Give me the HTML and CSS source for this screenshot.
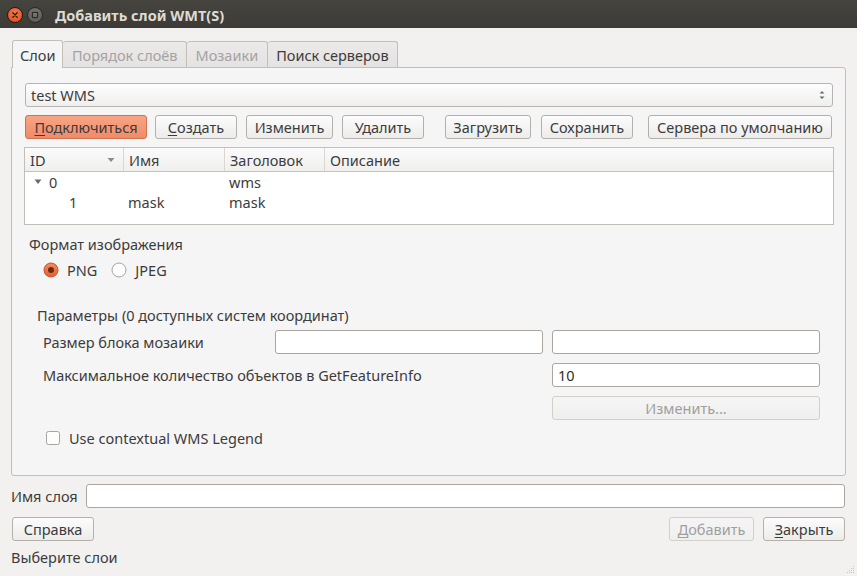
FILE: index.html
```html
<!DOCTYPE html>
<html lang="ru">
<head>
<meta charset="utf-8">
<title>Добавить слой WMT(S)</title>
<link rel="stylesheet" href="styles.css">
</head>
<body>
<div class="window">
  <div class="titlebar">
    <span class="wbtn close"><svg width="16" height="16" viewBox="0 0 16 16"><path d="M5.5 5.5 L10.5 10.5 M10.5 5.5 L5.5 10.5" stroke="#3a1a0c" stroke-width="1.6" stroke-linecap="round"/></svg></span>
    <span class="wbtn mini"><svg width="16" height="16" viewBox="0 0 16 16"><rect x="5" y="5" width="6" height="6" rx="1" fill="none" stroke="#2b2a27" stroke-width="1.4"/></svg></span>
    <span class="title">Добавить слой WMT(S)</span>
  </div>
  <div class="content">
    <div class="tabs">
      <div class="tab active">Слои</div>
      <div class="tab disabled">Порядок слоёв</div>
      <div class="tab disabled">Мозаики</div>
      <div class="tab">Поиск серверов</div>
    </div>
    <div class="pane">
      <div class="combo">
        <span>test WMS</span>
        <svg class="spin" width="8" height="12" viewBox="0 0 8 12"><path d="M1.5 4.5 L4 2 L6.5 4.5 Z M1.5 7.5 L4 10 L6.5 7.5 Z" fill="#6a6a6a"/></svg>
      </div>
      <div class="btnrow">
        <button class="btn primary w-connect"><u>П</u>одключиться</button>
        <button class="btn w-create"><u>С</u>оздать</button>
        <button class="btn w-edit">Изменить</button>
        <button class="btn w-del">Удалить</button>
        <button class="btn w-load">Загрузить</button>
        <button class="btn w-save">Сохранить</button>
        <button class="btn w-def">Сервера по умолчанию</button>
      </div>
      <div class="tree">
        <div class="thead">
          <div class="th c1">ID<svg class="sort" width="8" height="6" viewBox="0 0 8 6"><path d="M0.5 1 L7.5 1 L4 5 Z" fill="#8a8a8a"/></svg></div>
          <div class="th c2">Имя</div>
          <div class="th c3">Заголовок</div>
          <div class="th c4">Описание</div>
        </div>
        <div class="trow first">
          <div class="td c1"><svg class="expand" width="8" height="6" viewBox="0 0 8 6"><path d="M0.5 0.5 L7.5 0.5 L4 5 Z" fill="#6a6a6a"/></svg>0</div>
          <div class="td c2"></div>
          <div class="td c3">wms</div>
        </div>
        <div class="trow">
          <div class="td c1 child">1</div>
          <div class="td c2">mask</div>
          <div class="td c3">mask</div>
        </div>
      </div>
      <div class="section-label">Формат изображения</div>
      <div class="radios">
        <label class="radio"><svg width="16" height="16" viewBox="0 0 16 16"><defs><linearGradient id="rg" x1="0" y1="0" x2="0" y2="1"><stop offset="0" stop-color="#f48a62"/><stop offset="1" stop-color="#e3602f"/></linearGradient></defs><circle cx="8" cy="8" r="7" fill="url(#rg)" stroke="#c2532a"/><circle cx="8" cy="8" r="3" fill="#6b2a12"/></svg>PNG</label>
        <label class="radio"><svg width="16" height="16" viewBox="0 0 16 16"><circle cx="8" cy="8" r="7" fill="#fdfdfd" stroke="#a8a49e"/></svg>JPEG</label>
      </div>
      <div class="params">
        <div class="params-title">Параметры (0 доступных систем координат)</div>
        <div class="grid">
          <div class="glabel">Размер блока мозаики</div>
          <div class="input"></div>
          <div class="input"></div>
          <div class="glabel">Максимальное количество объектов в GetFeatureInfo</div>
          <div class="gempty"></div>
          <div class="input">10</div>
          <div class="gempty"></div>
          <div class="gempty"></div>
          <button class="btn wide disabledbtn">Изменить...</button>
        </div>
      </div>
      <label class="check"><svg width="14" height="14" viewBox="0 0 14 14"><rect x="0.5" y="0.5" width="13" height="13" rx="2" fill="#fdfdfd" stroke="#a8a49e"/></svg>Use contextual WMS Legend</label>
    </div>
    <div class="namerow">
      <span class="namelabel">Имя слоя</span>
      <div class="input grow"></div>
    </div>
    <div class="footer">
      <button class="btn w-82">Справка</button>
      <div class="fill"></div>
      <button class="btn disabledbtn w-add"><u>Д</u>обавить</button>
      <button class="btn w-82"><u>З</u>акрыть</button>
    </div>
    <div class="status">Выберите слои</div>
  </div>
  <svg class="grip" width="10" height="10" viewBox="0 0 10 10"><g fill="#c9c6c2"><rect x="8" y="2" width="1" height="1"/><rect x="6" y="4" width="1" height="1"/><rect x="8" y="4" width="1" height="1"/><rect x="4" y="6" width="1" height="1"/><rect x="6" y="6" width="1" height="1"/><rect x="8" y="6" width="1" height="1"/><rect x="2" y="8" width="1" height="1"/><rect x="4" y="8" width="1" height="1"/><rect x="6" y="8" width="1" height="1"/><rect x="8" y="8" width="1" height="1"/></g></svg>
</div>
</body>
</html>
```
FILE: styles.css
```css
* { box-sizing: border-box; }
html, body { margin: 0; padding: 0; }
body {
  width: 857px;
  height: 576px;
  overflow: hidden;
  background: #f2f1f0;
  font-family: "Noto Sans", "Open Sans", sans-serif;
  font-size: 14.5px;
  color: #3c3c3c;
}
.window { position: relative; width: 857px; height: 576px; }
.titlebar {
  height: 28px;
  background: linear-gradient(#45443f, #3c3b37);
  display: flex;
  align-items: center;
  padding-left: 7px;
}
.wbtn {
  width: 16px; height: 16px; border-radius: 50%;
  display: inline-flex; align-items: center; justify-content: center;
  margin-top: 2px;
}
.wbtn.close {
  background: radial-gradient(circle at 50% 35%, #f47a4e, #df4a1b);
  border: 1px solid #2b1a12;
}
.wbtn.mini {
  margin-left: 4px;
  background: radial-gradient(circle at 50% 35%, #7a7975, #55544f);
  border: 1px solid #2b2a27;
}
.title {
  margin-left: 12px;
  color: #dfdbd2;
  font-weight: bold;
  font-size: 14.5px;
  margin-top: 2px;
}
.content { padding: 12px 11px 0 11px; }
.tabs { display: flex; padding-left: 1px; height: 27px; align-items: flex-end; }
.tab {
  height: 26px;
  padding: 0 8.5px;
  display: flex; align-items: center;
  border: 1px solid #c2beb8;
  border-bottom: none;
  border-left: none;
  background: linear-gradient(#ebeae9, #e4e3e1);
  border-radius: 3px 3px 0 0;
  color: #3c3c3c;
}
.tab.active {
  height: 28px;
  border-left: 1px solid #c2beb8;
  background: #f5f5f5;
  margin-bottom: -1px;
  position: relative;
  z-index: 1;
  padding: 0 7px;
}
.tab.disabled { color: #a3a3a3; }
.pane {
  border: 1px solid #c2beb8;
  border-radius: 0 3px 3px 3px;
  background: #f5f5f5;
  padding: 15px 12px 0 13px;
  height: 409px;
}
.combo {
  height: 24px;
  border: 1px solid #b9b5ae;
  border-radius: 3px;
  background: linear-gradient(#fdfdfd, #efefee);
  display: flex; align-items: center;
  padding: 0 6px 0 5px;
  justify-content: space-between;
}
.btnrow { display: flex; margin-top: 8px; }
.btn {
  height: 24px;
  font: inherit;
  color: #3c3c3c;
  border: 1px solid #b5b0a9;
  border-radius: 3px;
  background: linear-gradient(#fcfcfc, #ececeb);
  padding: 0 4px;
  display: inline-flex; align-items: center; justify-content: center;
  white-space: nowrap;
}
.btn u { text-decoration: underline; text-underline-offset: 2px; }
.btn.primary {
  background: linear-gradient(#f8a586, #f18a66);
  border-color: #cf7353;
}
.w-connect { width: 122px; }
.w-create { width: 82px; margin-left: 8px; }
.w-edit { width: 87px; margin-left: 9px; }
.w-del { width: 82px; margin-left: 9px; }
.w-load { width: 86px; margin-left: 21px; }
.w-save { width: 92px; margin-left: 10px; }
.w-def { width: 184px; margin-left: 15px; }
.w-82 { width: 82px; }
.w-add { width: 85px; }
.tree {
  margin-top: 8px;
  height: 78px;
  border: 1px solid #c2beb8;
  background: #fff;
  margin-left: -1px;
  margin-right: -1px;
}
.thead {
  display: flex;
  height: 24px;
  background: linear-gradient(#fbfbfb, #efefee);
  border-bottom: 1px solid #c6c3be;
}
.th {
  display: flex; align-items: center;
  padding-left: 5px;
  border-right: 1px solid #dad7d3;
}
.c1 { width: 99px; }
.c2 { width: 101px; }
.c3 { width: 100px; }
.c4 { flex: 1; border-right: none; }
.th.c1 { justify-content: space-between; padding-right: 8px; }
.trow { display: flex; height: 20px; line-height: 20px; align-items: center; }
.td { padding-left: 4px; display: flex; align-items: center; height: 20px; line-height: 20px; }
.td.c1 { padding-left: 9px; }
.expand { margin-right: 7px; }
.td.child { padding-left: 44px; }
.section-label { margin-top: 10px; height: 18px; line-height: 18px; padding-left: 4px; }
.radios { display: flex; padding-left: 18px; margin-top: 8px; gap: 14px; height: 18px; }
.radio { display: flex; align-items: center; gap: 8px; }
.params { padding-left: 12px; margin-top: 27px; }
.params-title { height: 18px; line-height: 18px; }
.grid {
  display: grid;
  grid-template-columns: 223px 268px 268px;
  column-gap: 9px;
  row-gap: 9px;
  margin-top: 6px;
  padding-left: 6px;
}
.glabel { display: flex; align-items: center; white-space: nowrap; }
.input {
  height: 24px;
  border: 1px solid #aaa59e;
  border-radius: 3px;
  background: #fff;
  display: flex; align-items: center;
  padding-left: 5px;
  color: #2e2e2e;
}
.btn.wide { width: 268px; }
.disabledbtn { color: #9f9f9f; border-color: #d3d0cc; background: linear-gradient(#f5f5f5, #efefee); }
.check { display: flex; align-items: center; gap: 9px; margin-top: 9px; padding-left: 21px; height: 18px; }
.namerow { display: flex; align-items: center; margin-top: 8px; }
.namelabel { width: 75px; }
.grow { flex: 1; margin-right: 1px; }
.footer { display: flex; margin-top: 9px; gap: 9px; padding-left: 1px; padding-right: 1px; }
.fill { flex: 1; }
.status { margin-top: 7px; height: 18px; line-height: 18px; }
.grip { position: absolute; right: 2px; bottom: 2px; }
```
